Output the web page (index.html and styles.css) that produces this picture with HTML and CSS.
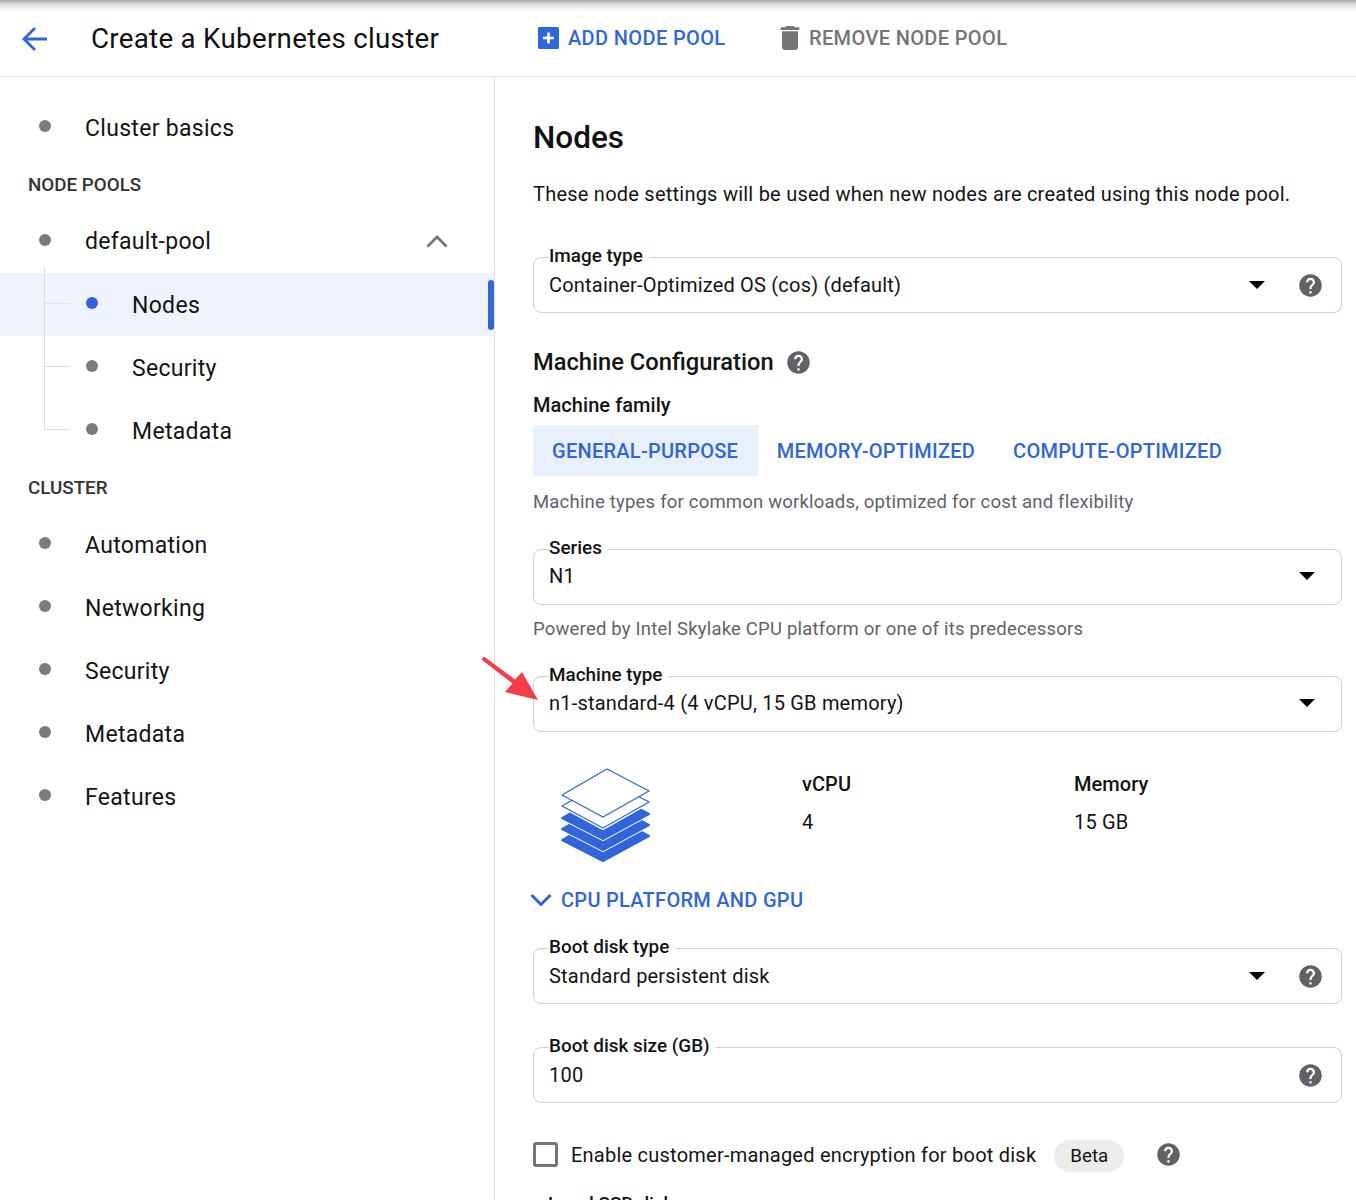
FILE: index.html
```html
<!DOCTYPE html>
<html lang="en">
<head>
<meta charset="utf-8">
<title>Create a Kubernetes cluster</title>
<link rel="stylesheet" href="styles.css">
</head>
<body>
<div class="page">
  <header class="topbar">
    <svg class="back" viewBox="0 0 28 26" width="28" height="26"><path d="M26 13H3M14 2 3 13l11 11" fill="none" stroke="#2f66dc" stroke-width="2.8"/></svg>
    <h1 class="title">Create a Kubernetes cluster</h1>
    <a class="action add">
      <svg class="add-icon" viewBox="0 0 21 22" width="21" height="22"><rect width="21" height="22" rx="1.5" fill="#2f66dc"/><path d="M10.5 5.5v11M5 11h11" stroke="#fff" stroke-width="2.6"/></svg>
      ADD NODE POOL
    </a>
    <a class="action remove">
      <svg class="trash-icon" viewBox="0 0 24 24" width="32" height="32"><path fill="#757575" d="M6 19c0 1.1.9 2 2 2h8c1.1 0 2-.9 2-2V7H6v12zM19 4h-3.5l-1-1h-5l-1 1H5v2h14V4z"/></svg>
      REMOVE NODE POOL
    </a>
  </header>
  <div class="layout">
    <nav class="sidebar">
      <div class="nav-item"><span class="dot"></span><span>Cluster basics</span></div>
      <div class="nav-section">NODE POOLS</div>
      <div class="nav-item nav-pool"><span class="dot"></span><span>default-pool</span>
        <svg class="collapse" viewBox="0 0 22 13" width="22" height="13"><path d="M1.5 11.5 11 2l9.500 9.500" fill="none" stroke="#757575" stroke-width="2.800"/></svg>
      </div>
      <div class="subtree">
        <div class="sub-item active"><span class="dot"></span><span>Nodes</span></div>
        <div class="sub-item"><span class="dot"></span><span>Security</span></div>
        <div class="sub-item"><span class="dot"></span><span>Metadata</span></div>
      </div>
      <div class="nav-section">CLUSTER</div>
      <div class="nav-item"><span class="dot"></span><span>Automation</span></div>
      <div class="nav-item"><span class="dot"></span><span>Networking</span></div>
      <div class="nav-item"><span class="dot"></span><span>Security</span></div>
      <div class="nav-item"><span class="dot"></span><span>Metadata</span></div>
      <div class="nav-item"><span class="dot"></span><span>Features</span></div>
    </nav>
    <main class="content">
      <h2 class="page-heading">Nodes</h2>
      <p class="intro">These node settings will be used when new nodes are created using this node pool.</p>

      <fieldset class="field field-image">
        <legend>Image type</legend>
        <div class="field-row">
          <span class="value">Container-Optimized OS (cos) (default)</span>
          <span class="caret caret-help"></span>
          <svg class="help" viewBox="0 0 24 24" width="27" height="27"><path fill="#5f6368" d="M12 2C6.480 2 2 6.480 2 12s4.480 10 10 10 10-4.480 10-10S17.520 2 12 2zm1 17h-2v-2h2v2zm2.070-7.750l-.9.920C13.450 12.900 13 13.500 13 15h-2v-.5c0-1.100.45-2.100 1.170-2.830l1.240-1.260c.37-.36.59-.86.59-1.410 0-1.100-.9-2-2-2s-2 .9-2 2H8c0-2.210 1.790-4 4-4s4 1.790 4 4c0 .88-.36 1.680-.93 2.250z"/></svg>
        </div>
      </fieldset>

      <div class="config-heading">
        <h3>Machine Configuration</h3>
        <svg class="help" viewBox="0 0 24 24" width="27" height="27"><path fill="#5f6368" d="M12 2C6.480 2 2 6.480 2 12s4.480 10 10 10 10-4.480 10-10S17.520 2 12 2zm1 17h-2v-2h2v2zm2.070-7.750l-.9.920C13.450 12.900 13 13.500 13 15h-2v-.5c0-1.100.45-2.100 1.170-2.830l1.240-1.260c.37-.36.59-.86.59-1.410 0-1.100-.9-2-2-2s-2 .9-2 2H8c0-2.210 1.790-4 4-4s4 1.790 4 4c0 .88-.36 1.680-.93 2.250z"/></svg>
      </div>
      <div class="family-label">Machine family</div>
      <div class="tabs">
        <span class="tab selected">GENERAL-PURPOSE</span>
        <span class="tab">MEMORY-OPTIMIZED</span>
        <span class="tab">COMPUTE-OPTIMIZED</span>
      </div>
      <p class="hint hint-family">Machine types for common workloads, optimized for cost and flexibility</p>

      <fieldset class="field field-series">
        <legend>Series</legend>
        <div class="field-row"><span class="value">N1</span><span class="caret"></span></div>
      </fieldset>
      <p class="hint hint-series">Powered by Intel Skylake CPU platform or one of its predecessors</p>

      <fieldset class="field field-series">
        <legend>Machine type</legend>
        <div class="field-row"><span class="value">n1-standard-4 (4 vCPU, 15 GB memory)</span><span class="caret"></span></div>
      </fieldset>

      <div class="specs">
        <svg class="stack" viewBox="0 0 90 95" width="90" height="95">
          <g stroke-linejoin="round">
            <polygon class="layer-solid" points="46,46 88,68 42,93 1,72"/>
            <polygon class="layer-halo" points="46,35 88,57 42,82 1,61"/>
            <polygon class="layer-solid" points="46,35 88,57 42,82 1,61"/>
            <polygon class="layer-halo" points="46,24 88,46 42,71 1,50"/>
            <polygon class="layer-solid" points="46,24 88,46 42,71 1,50"/>
            <polygon class="layer-halo" points="46,12 88,34 42,60 1,38"/>
            <polygon class="layer-line" points="46,12 88,34 42,60 1,38"/>
            <polygon class="layer-line" points="46,1 88,23 42,49 1,27"/>
          </g>
        </svg>
        <div class="spec spec-cpu"><div class="spec-label">vCPU</div><div class="spec-value">4</div></div>
        <div class="spec"><div class="spec-label">Memory</div><div class="spec-value">15 GB</div></div>
      </div>

      <div class="expander">
        <svg viewBox="0 0 22 14" width="22" height="14"><path d="M1.500 2 11 11.500 20.500 2" fill="none" stroke="#2f66dc" stroke-width="3"/></svg>
        <span>CPU PLATFORM AND GPU</span>
      </div>

      <fieldset class="field field-boot">
        <legend>Boot disk type</legend>
        <div class="field-row">
          <span class="value">Standard persistent disk</span>
          <span class="caret caret-help"></span>
          <svg class="help" viewBox="0 0 24 24" width="27" height="27"><path fill="#5f6368" d="M12 2C6.480 2 2 6.480 2 12s4.480 10 10 10 10-4.480 10-10S17.520 2 12 2zm1 17h-2v-2h2v2zm2.070-7.750l-.9.920C13.450 12.900 13 13.500 13 15h-2v-.5c0-1.100.45-2.100 1.170-2.830l1.240-1.260c.37-.36.59-.86.59-1.410 0-1.100-.9-2-2-2s-2 .9-2 2H8c0-2.210 1.790-4 4-4s4 1.790 4 4c0 .88-.36 1.680-.93 2.250z"/></svg>
        </div>
      </fieldset>

      <fieldset class="field field-size">
        <legend>Boot disk size (GB)</legend>
        <div class="field-row">
          <span class="value">100</span>
          <svg class="help" viewBox="0 0 24 24" width="27" height="27"><path fill="#5f6368" d="M12 2C6.480 2 2 6.480 2 12s4.480 10 10 10 10-4.480 10-10S17.520 2 12 2zm1 17h-2v-2h2v2zm2.070-7.750l-.9.920C13.450 12.900 13 13.500 13 15h-2v-.5c0-1.100.45-2.100 1.170-2.830l1.240-1.260c.37-.36.59-.86.59-1.410 0-1.100-.9-2-2-2s-2 .9-2 2H8c0-2.210 1.790-4 4-4s4 1.790 4 4c0 .88-.36 1.680-.93 2.250z"/></svg>
        </div>
      </fieldset>

      <div class="check-row">
        <span class="checkbox"></span>
        <span class="check-label">Enable customer-managed encryption for boot disk</span>
        <span class="beta">Beta</span>
        <svg class="help" viewBox="0 0 24 24" width="27" height="27"><path fill="#5f6368" d="M12 2C6.480 2 2 6.480 2 12s4.480 10 10 10 10-4.480 10-10S17.520 2 12 2zm1 17h-2v-2h2v2zm2.070-7.750l-.9.920C13.450 12.900 13 13.500 13 15h-2v-.5c0-1.100.45-2.100 1.170-2.830l1.240-1.260c.37-.36.59-.86.59-1.410 0-1.100-.9-2-2-2s-2 .9-2 2H8c0-2.210 1.790-4 4-4s4 1.790 4 4c0 .88-.36 1.680-.93 2.250z"/></svg>
      </div>
      <div class="ssd-label">Local SSD disk</div>
    </main>
  </div>
  <svg class="callout" viewBox="0 0 60 46" width="60" height="46"><path fill="#f83c46" d="M.5 3.500 3 .5 34 23.500 41 16 57 44 24 36 31.500 27.500z"/></svg>
</div>
</body>
</html>
```
FILE: styles.css
```css
* { box-sizing: border-box; }
html, body { margin: 0; padding: 0; }
body { background: #fff; color: #141414; font-family: Roboto, "Liberation Sans", sans-serif; font-size: 20px; letter-spacing: .2px; }
.page { position: relative; width: 1356px; height: 1200px; overflow: hidden; }

.topbar { display: flex; align-items: center; height: 77px; border-bottom: 1px solid #e0e0e0; background: linear-gradient(#a9a9a9 0, #e4e4e4 5px, #fff 11px); padding-left: 21px; }
.back { flex: none; margin-top: 1px; }
.title { margin: 0 0 0 42px; width: 447px; font-size: 27.700px; font-weight: 400; letter-spacing: .3px; color: #111; white-space: nowrap; }
.action { display: flex; align-items: center; font-size: 20px; font-weight: 500; letter-spacing: .36px; white-space: nowrap; }
.add { color: #2f66dc; width: 241px; }
.add-icon { margin-right: 9px; }
.remove { color: #757575; }
.trash-icon { margin-left: -5px; margin-right: 3px; }

.layout { display: flex; height: 1123px; }
.sidebar { flex: none; width: 495px; border-right: 1px solid #e0e0e0; padding-top: 19px; font-size: 23px; letter-spacing: .3px; }
.nav-item { position: relative; display: flex; align-items: center; height: 63px; padding: 2px 0 0 39px; }
.nav-item.nav-pool { padding-top: 0; }
.dot { flex: none; width: 12px; height: 12px; border-radius: 50%; background: #7b7b7b; margin-right: 34px; transform: translateY(-3px); }
.nav-pool .dot { transform: translateY(-2px); }
.nav-section { display: flex; align-items: center; height: 51px; padding-left: 28px; font-size: 18.800px; font-weight: 500; color: #333; letter-spacing: 0; }
.collapse { position: absolute; left: 426px; top: 25px; }

.subtree { position: relative; }
.subtree::before { content: ""; position: absolute; left: 44px; top: -6px; height: 163px; border-left: 1px solid #d9dce3; z-index: 1; }
.sub-item { position: relative; display: flex; align-items: center; height: 63px; padding: 2px 0 0 86px; }
.sub-item::before { content: ""; position: absolute; left: 44px; width: 26px; top: 30px; border-top: 1px solid #dedfe3; }
.sub-item.active { background: #eff3fd; }
.sub-item.active .dot { background: #2f66dc; }
.sub-item.active::after { content: ""; position: absolute; right: 0; top: 7px; width: 6px; height: 50px; border-radius: 3px; background: #2f66dc; }

.content { flex: 1; padding: 40px 14px 0 38px; min-width: 0; }
.page-heading { margin: 0; height: 42px; line-height: 42px; font-size: 31.500px; font-weight: 500; color: #111; letter-spacing: 0; }
.intro { margin: 23px 0 0; height: 24px; line-height: 24px; letter-spacing: .235px; white-space: nowrap; }

.field { margin: 0; padding: 0 15px; border: 1px solid #cfcfcf; border-radius: 8px; min-width: 0; height: 68px; }
.field legend { padding: 0 6px 0 0; height: 24px; line-height: 22px; font-size: 18.900px; font-weight: 500; letter-spacing: 0; }
.field-image { margin-top: 39px; }
.field-series { margin-top: 24px; }
.field-boot { margin-top: 24px; }
.field-size { margin-top: 31px; }
.field-row { display: flex; align-items: center; height: 32px; margin-top: 0; }
.field-series .field-row { height: 30px; }
.value { flex: 1; white-space: nowrap; }
.caret { width: 0; height: 0; border-left: 8px solid transparent; border-right: 8px solid transparent; border-top: 8px solid #000; margin-right: 11px; }
.caret-help { margin-right: 32px; }
.help { flex: none; margin-right: 2px; }

.config-heading { display: flex; align-items: center; margin-top: 34px; height: 30px; }
.config-heading h3 { margin: 0 11px 0 0; font-size: 23.700px; font-weight: 500; letter-spacing: 0; }
.family-label { margin-top: 16px; height: 24px; line-height: 24px; font-weight: 500; letter-spacing: .05px; }
.tabs { display: flex; margin-top: 8px; height: 51px; }
.tab { display: flex; align-items: center; padding: 0 19px; color: #2f66dc; font-weight: 500; font-size: 20px; letter-spacing: .26px; white-space: nowrap; }
.tab.selected { background: #e8f0fe; padding-right: 19.500px; }
.hint { margin: 0; height: 24px; line-height: 26px; font-size: 18.500px; color: #5f6368; letter-spacing: .2px; white-space: nowrap; }
.hint-family { margin-top: 13px; }
.hint-series { margin-top: 11px; }

.specs { display: flex; margin-top: 36px; height: 95px; }
.stack { flex: none; margin-left: 28px; }
.layer-solid { fill: #2f66dc; stroke: #2f66dc; stroke-width: 2; }
.layer-halo { fill: #fff; stroke: #fff; stroke-width: 4; }
.layer-line { fill: #fff; stroke: #2f66dc; stroke-width: 1.300; }
.spec { line-height: 24px; padding-top: 4px; }
.spec-cpu { margin-left: 151px; width: 272px; }
.spec-label { font-weight: 500; letter-spacing: .05px; }
.spec-value { margin-top: 14px; }

.expander { display: flex; align-items: center; margin-top: 25px; margin-left: -3px; height: 24px; color: #2f66dc; font-weight: 500; letter-spacing: .28px; }
.expander span { margin-left: 9px; }

.check-row { display: flex; align-items: center; margin-top: 37px; height: 28px; }
.checkbox { flex: none; width: 25px; height: 25px; border: 3px solid #757575; border-radius: 3px; }
.check-label { margin-left: 13px; padding-top: 2px; letter-spacing: .23px; white-space: nowrap; }
.beta { display: flex; align-items: center; height: 32px; margin-left: 18px; margin-top: 4px; padding: 0 16px; border-radius: 16px; background: #ececec; font-size: 18.800px; letter-spacing: 0; }
.check-row .help { margin-left: 31px; }
.ssd-label { margin: 24px 0 0 15px; font-size: 18.900px; font-weight: 500; letter-spacing: 0; line-height: 24px; white-space: nowrap; }

.callout { position: absolute; left: 481px; top: 656px; }
```
